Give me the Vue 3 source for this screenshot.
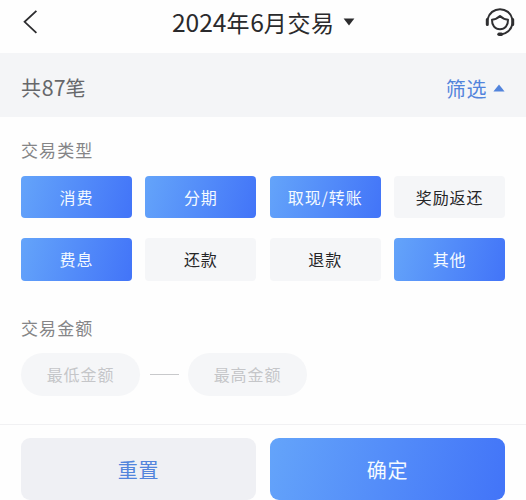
<script setup>
import { ref, reactive } from 'vue'

const types = reactive([
  { name: '消费', on: true },
  { name: '分期', on: true },
  { name: '取现/转账', on: true },
  { name: '奖励返还', on: false },
  { name: '费息', on: true },
  { name: '还款', on: false },
  { name: '退款', on: false },
  { name: '其他', on: true },
])
const min = ref('')
const max = ref('')

function reset() {
  types.forEach((t) => (t.on = false))
  min.value = ''
  max.value = ''
}
</script>

<template>
  <div class="page">
    <header class="nav">
      <svg class="back" width="16" height="26" viewBox="0 0 16 26">
        <path d="M14.4 1.8 2.6 12.8l11.8 11" fill="none" stroke="#2c2c2e" stroke-width="1.8" />
      </svg>
      <div class="title">
        <span><b class="num">2024</b>年<b class="num">6</b>月交易</span>
        <svg width="12" height="8" viewBox="0 0 12 8"><path d="M.6.4h10.8L6 7.4z" fill="#2c2c2e" /></svg>
      </div>
      <svg class="service" width="30" height="30" viewBox="0 0 30 30" fill="none" stroke="#2f2f31" stroke-linecap="round" stroke-linejoin="round">
        <path d="M2.7 12A12.6 12.6 0 0 1 27.3 12" stroke-width="2" />
        <path d="M27.3 17.5A12.8 12.8 0 0 1 16 27.4" stroke-width="2" />
        <path d="M2.3 12.6v5M27.7 12.6v5" stroke-width="3" />
        <path d="M14 27.3h2.4" stroke-width="3.4" />
        <path d="M7 12.7c3.2-.3 5.800-1.500 8-3.700 2.200 2.200 4.800 3.400 8 3.700.2 5.800-3 9.600-8 9.600s-8.200-3.800-8-9.600z" stroke-width="2" />
      </svg>
    </header>

    <div class="summary">
      <span class="count">共<b class="num">87</b>笔</span>
      <span class="filter">
        筛选
        <svg width="12" height="8" viewBox="0 0 12 8"><path d="M.4 7.6h11.2L6 .6z" fill="#5284dc" /></svg>
      </span>
    </div>

    <main class="panel">
      <h2 class="label">交易类型</h2>
      <div class="types">
        <button v-for="t in types" :key="t.name" class="chip" :class="{ on: t.on }" @click="t.on = !t.on">
          {{ t.name }}
        </button>
      </div>
      <h2 class="label amount">交易金额</h2>
      <div class="range">
        <input v-model="min" placeholder="最低金额" />
        <i class="dash"></i>
        <input v-model="max" placeholder="最高金额" />
      </div>
    </main>

    <footer class="actions">
      <button class="reset" @click="reset">重置</button>
      <button class="confirm">确定</button>
    </footer>
  </div>
</template>

<style>
body {
  margin: 0;
  background: #fff;
  overflow: hidden;
}
</style>

<style scoped>
.page {
  display: flex;
  flex-direction: column;
  height: 500px;
  background: #fefefe;
  font-family: 'Noto Sans CJK SC', sans-serif;
}
button,
input {
  font-family: inherit;
  border: 0;
  padding: 0;
  margin: 0;
  min-width: 0;
}
.nav {
  display: flex;
  align-items: center;
  justify-content: space-between;
  box-sizing: border-box;
  height: 53px;
  flex: none;
  padding: 0 10.5px 9px 22px;
}
.num {
  font-weight: 400;
  font-size: 1.07em;
  line-height: 1;
  letter-spacing: 0;
}
.title {
  display: flex;
  align-items: center;
  gap: 8px;
  padding-left: 3px;
  font-size: 23px;
  line-height: 30px;
  letter-spacing: 0.6px;
  color: #2a2a2c;
}
.summary {
  display: flex;
  align-items: center;
  justify-content: space-between;
  box-sizing: border-box;
  height: 64px;
  flex: none;
  padding: 6px 21px 0;
  background: #f4f5f7;
}
.count {
  font-size: 20px;
  line-height: 28px;
  letter-spacing: 0.8px;
  color: #66676a;
}
.filter {
  display: flex;
  align-items: center;
  gap: 6px;
  font-size: 20px;
  letter-spacing: 0.6px;
  color: #5284dc;
}
.panel {
  flex: 1;
  padding: 20px 21px 0;
}
.label {
  margin: 0;
  font-size: 17px;
  font-weight: 400;
  line-height: 26px;
  letter-spacing: 1.1px;
  color: #858587;
}
.types {
  display: grid;
  grid-template-columns: repeat(4, 1fr);
  gap: 20px 13.5px;
  margin-top: 12.6px;
}
.chip {
  height: 42.5px;
  border-radius: 4px;
  background: #f5f6f8;
  color: #252527;
  font-size: 16px;
  letter-spacing: 0.9px;
}
.chip.on,
.confirm {
  background: linear-gradient(105deg, #64a4fa, #4274f8);
  color: #f4faff;
}
.amount {
  margin-top: 34px;
}
.range {
  display: flex;
  align-items: center;
  margin-top: 12.4px;
}
.range input {
  box-sizing: border-box;
  width: 119px;
  height: 43px;
  padding-bottom: 1px;
  border-radius: 22px;
  background: #f5f6f8;
  text-align: center;
  font-size: 16px;
  letter-spacing: 0.9px;
  color: #252527;
  outline: none;
}
.range input::placeholder {
  color: #c5c6c9;
  opacity: 1;
}
.dash {
  width: 29px;
  height: 1px;
  margin: 0 9px 0 10px;
  background: #c8c9cb;
}
.actions {
  display: grid;
  grid-template-columns: 1fr 1fr;
  gap: 14px;
  box-sizing: border-box;
  height: 76px;
  flex: none;
  padding: 13px 21px 0;
  border-top: 1px solid #f1f1f3;
}
.actions button {
  height: 62px;
  border-radius: 9px;
  font-size: 20px;
  letter-spacing: 0.8px;
}
.reset {
  background: #eff0f4;
  color: #5284dc;
}
</style>
